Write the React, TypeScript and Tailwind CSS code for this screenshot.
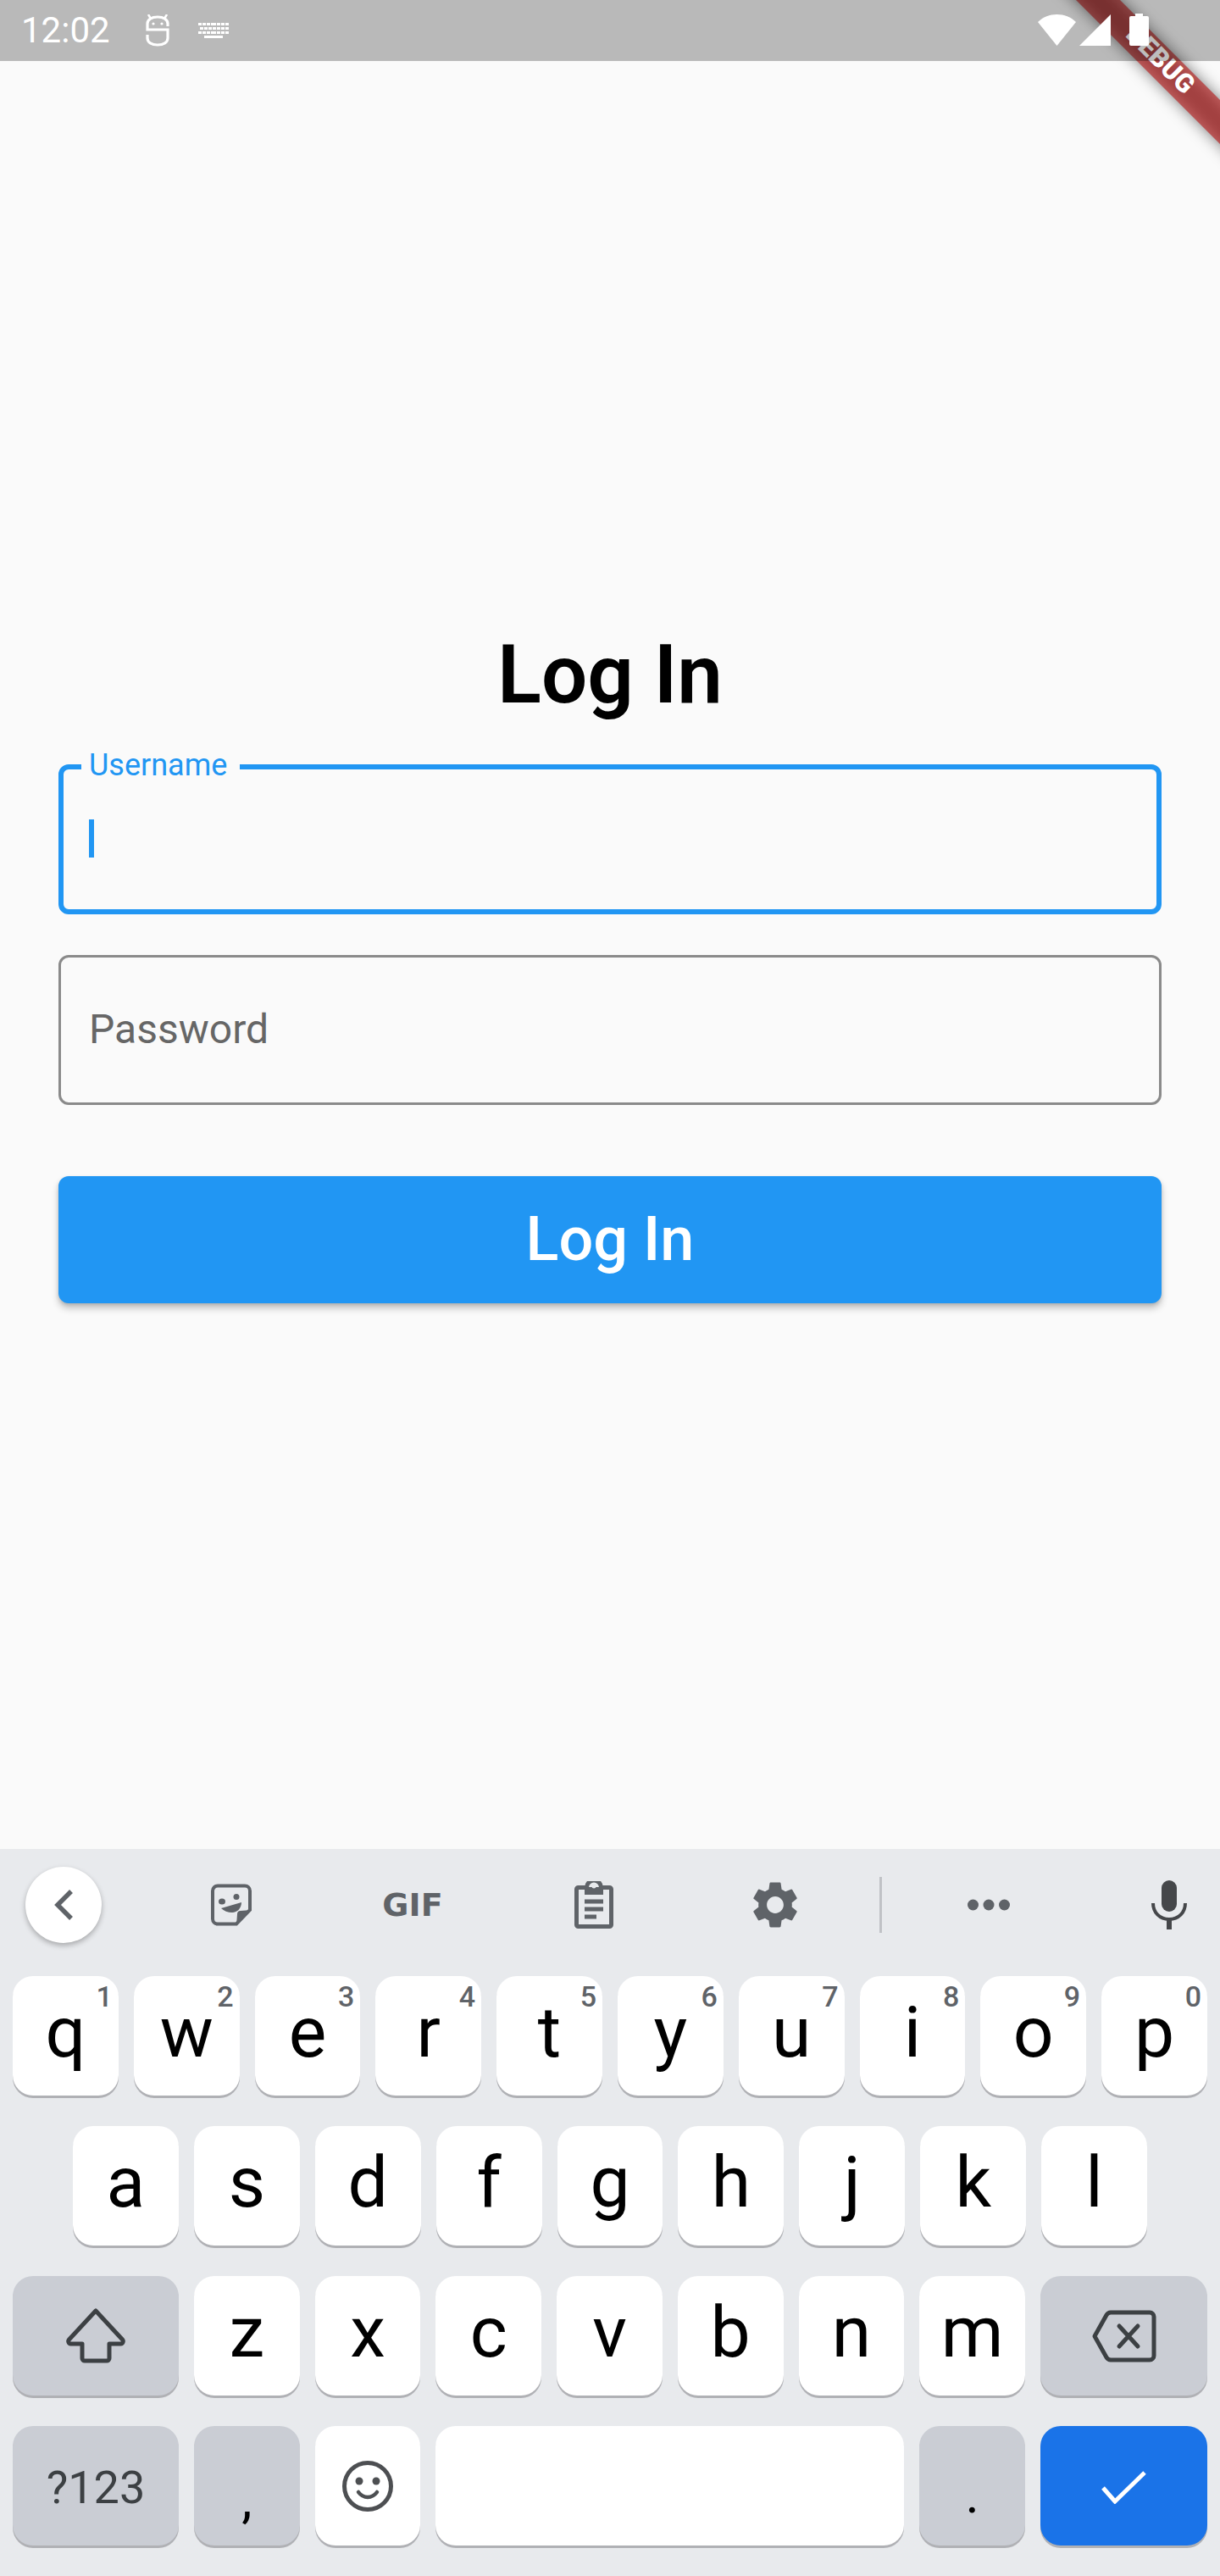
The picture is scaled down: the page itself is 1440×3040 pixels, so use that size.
import type { ReactNode } from "react";

const ROW_1 = [
  ["q", "1"],
  ["w", "2"],
  ["e", "3"],
  ["r", "4"],
  ["t", "5"],
  ["y", "6"],
  ["u", "7"],
  ["i", "8"],
  ["o", "9"],
  ["p", "0"],
];
const ROW_2 = ["a", "s", "d", "f", "g", "h", "j", "k", "l"];
const ROW_3 = ["z", "x", "c", "v", "b", "n", "m"];

function Key({
  children,
  hint,
  className = "bg-white text-black",
}: {
  children?: ReactNode;
  hint?: string;
  className?: string;
}) {
  return (
    <div
      className={`relative flex h-[141px] items-center justify-center rounded-[24px] shadow-[0_3px_0_#b0b1b5] ${className}`}
    >
      {hint && (
        <span className="absolute right-[7px] top-[4px] text-[34px] leading-[40px] font-medium text-[#5f6368]">
          {hint}
        </span>
      )}
      {children}
    </div>
  );
}

function Letter({ value }: { value: string }) {
  return <span className="pb-[7px] text-[84px] leading-[84px]">{value}</span>;
}

function DebugBanner() {
  return (
    <svg
      className="absolute right-0 top-0"
      width="300"
      height="260"
      viewBox="0 0 300 260"
    >
      <defs>
        <filter id="bannerBlur" x="-30%" y="-30%" width="160%" height="160%">
          <feGaussianBlur stdDeviation="9" />
        </filter>
      </defs>
      <polygon
        points="60,-70 112,-70 400,218 400,270"
        fill="#000"
        fillOpacity="0.5"
        filter="url(#bannerBlur)"
      />
      <polygon
        points="130,0 182,0 400,218 400,270"
        fill="#b71c1c"
        fillOpacity="0.63"
      />
      <text
        x="230"
        y="70"
        transform="rotate(45 230 70)"
        textAnchor="middle"
        dominantBaseline="central"
        fill="#fff"
        fontFamily="Roboto, sans-serif"
        fontWeight="900"
        fontSize="31"
      >
        DEBUG
      </text>
    </svg>
  );
}

function StatusBar() {
  return (
    <div className="absolute left-0 right-0 top-0 flex h-[72px] items-center bg-[rgba(0,0,0,0.26)] pl-[25px] text-white">
      <span className="text-[42px] leading-[72px]">12:02</span>
      <svg className="ml-[42px]" width="28" height="38" viewBox="0 0 28 38" fill="none">
        <path
          d="M26 14V11C26 6 21 3 14 3S2 6 2 11v7h24v10c0 5-5 8-12 8S2 33 2 28v-4"
          stroke="#fff"
          strokeWidth="3.2"
        />
        <path d="M3 0l3 5M25 0l-3 5" stroke="#fff" strokeWidth="2.5" />
        <circle cx="9" cy="11" r="1.6" fill="#fff" />
        <circle cx="19" cy="11" r="1.6" fill="#fff" />
      </svg>
      <svg className="ml-[34px]" width="36" height="20" viewBox="0 0 36 20" fill="#fff">
        <path d="M0 1h4v3H0zM5 1h4v3H5zM10 1h4v3h-4zM15 1h6v3h-6zM22 1h4v3h-4zM27 1h4v3h-4zM32 1h4v3h-4zM2 6h4v3H2zM7 6h4v3H7zM12 6h4v3h-4zM17 6h4v3h-4zM22 6h4v3h-4zM27 6h4v3h-4zM32 6h4v3h-4zM0 11h4v3H0zM5 11h4v3H5zM10 11h4v3h-4zM15 11h6v3h-6zM22 11h4v3h-4zM27 11h4v3h-4zM32 11h4v3h-4zM7 16h22v3H7z" />
      </svg>
      <svg className="absolute left-[1225px] top-[16px]" width="132" height="40" viewBox="0 0 132 40" fill="#fff">
        <path d="M0 10C6 4 14 1 22.5 1S39 4 45 10L22.5 38z" />
        <path d="M49 38L86 1v37z" />
        <path d="M115 0h9v3h5a2 2 0 0 1 2 2v31a2 2 0 0 1-2 2h-19a2 2 0 0 1-2-2V5a2 2 0 0 1 2-2h5z" />
      </svg>
    </div>
  );
}

function LoginForm() {
  return (
    <div className="flex flex-1 flex-col bg-[#fafafa] px-[69px] pt-[740px]">
      <h1 className="text-center text-[96px] leading-[112px] font-semibold text-black">
        Log In
      </h1>
      <div className="relative mt-[50px] flex h-[177px] items-center rounded-[12px] border-[6px] border-[#2196f3] pl-[30px]">
        <span className="absolute left-[21px] top-[-23px] bg-[#fafafa] pl-[9px] pr-[15px] text-[36px] leading-[36px] text-[#2196f3]">
          Username
        </span>
        <div className="mb-[3px] h-[45px] w-[6px] bg-[#2196f3]" />
      </div>
      <div className="mt-[48px] flex h-[177px] items-center rounded-[12px] border-[3px] border-[#8a8a8a] pl-[33px]">
        <span className="mb-[2px] text-[48px] leading-[56px] text-[#666666]">Password</span>
      </div>
      <button className="mt-[84px] flex h-[150px] items-center justify-center rounded-[12px] bg-[#2196f3] text-[72px] font-medium text-white shadow-[0_6px_9px_rgba(0,0,0,0.22),0_2px_4px_rgba(0,0,0,0.12)]">
        Log In
      </button>
    </div>
  );
}

function Toolbar() {
  return (
    <div className="mb-[18px] flex h-[132px] items-center pl-[30px]">
      <div className="flex h-[90px] w-[90px] items-center justify-center rounded-full bg-white shadow-[0_3px_6px_rgba(0,0,0,0.28)]">
        <svg width="28" height="38" viewBox="0 0 28 38" fill="none">
          <path d="M23 3L7 19l16 16" stroke="#5f6368" strokeWidth="5.5" />
        </svg>
      </div>
      <div className="ml-[46px] flex w-[214px] justify-center">
        <svg width="50" height="50" viewBox="0 0 50 50" fill="none">
          <path
            d="M31 47.500H9a6 6 0 0 1-6-6V8.500a6 6 0 0 1 6-6h32a6 6 0 0 1 6 6V31z"
            stroke="#5f6368"
            strokeWidth="4"
          />
          <path d="M31 49l1-13a4 4 0 0 1 4-4l13-1z" fill="#5f6368" />
          <ellipse cx="14" cy="21" rx="4" ry="3.500" fill="#5f6368" />
          <ellipse cx="31" cy="15.500" rx="3.500" ry="3.500" fill="#5f6368" />
          <path d="M13 29l24-7c0 7-5 12-11 12-5 0-10-2-13-5z" fill="#5f6368" />
        </svg>
      </div>
      <div className="flex w-[214px] justify-center">
        <span className="font-['DejaVu_Sans'] text-[38px] leading-[38px] font-bold text-[#5f6368]">
          GIF
        </span>
      </div>
      <div className="flex w-[214px] justify-center">
        <svg width="46" height="56" viewBox="0 0 46 56" fill="none">
          <path
            d="M2.500 9.500a2 2 0 0 1 2-2h10a8.500 8.500 0 0 1 17 0h10a2 2 0 0 1 2 2v42a2 2 0 0 1-2 2h-37a2 2 0 0 1-2-2z"
            stroke="#5f6368"
            strokeWidth="5"
          />
          <rect x="12" y="7" width="22" height="9" fill="#5f6368" />
          <circle cx="23" cy="6" r="2.500" fill="#e8eaed" />
          <path d="M12 24h22M12 33h22M12 42h14" stroke="#5f6368" strokeWidth="5" />
        </svg>
      </div>
      <div className="flex w-[214px] justify-center">
        <svg width="66" height="66" viewBox="0 0 24 24" fill="#5f6368">
          <path d="M19.14 12.94c.04-.3.06-.61.06-.94 0-.32-.02-.64-.07-.94l2.03-1.58c.18-.14.23-.41.12-.61l-1.92-3.32c-.12-.22-.37-.29-.59-.22l-2.39.96c-.5-.38-1.03-.7-1.62-.94l-.36-2.54c-.04-.24-.24-.41-.48-.41h-3.84c-.24 0-.43.17-.47.41l-.36 2.54c-.59.24-1.13.57-1.62.94l-2.39-.96c-.22-.08-.47 0-.59.22L2.740 8.870c-.12.21-.08.47.12.61l2.030 1.580c-.05.3-.09.63-.09.94s.02.64.07.94l-2.030 1.580c-.18.14-.23.41-.12.61l1.920 3.320c.12.22.37.29.59.22l2.390-.96c.5.38 1.030.7 1.620.94l.36 2.540c.05.24.24.41.48.41h3.840c.24 0 .44-.17.47-.41l.36-2.540c.59-.24 1.130-.56 1.620-.94l2.390.96c.22.08.47 0 .59-.22l1.920-3.320c.12-.22.07-.47-.12-.61l-2.010-1.580zM12 15.600c-1.980 0-3.600-1.620-3.600-3.600s1.620-3.600 3.600-3.600 3.600 1.620 3.600 3.600-1.620 3.600-3.600 3.600z" />
        </svg>
      </div>
      <div className="ml-[16px] h-[66px] w-[3px] bg-[#c0c2c6]" />
      <div className="ml-[19px] flex w-[214px] justify-center">
        <svg width="50" height="14" viewBox="0 0 50 14" fill="#5f6368">
          <circle cx="6.500" cy="7" r="6.500" />
          <circle cx="25" cy="7" r="6.500" />
          <circle cx="43.500" cy="7" r="6.500" />
        </svg>
      </div>
      <div className="ml-[56px] flex w-[100px] justify-center">
        <svg width="42" height="58" viewBox="0 0 42 58" fill="none">
          <rect x="12" y="0" width="18" height="37" rx="9" fill="#45474a" />
          <path d="M2 27c0 11 8 19 19 19s19-8 19-19" stroke="#45474a" strokeWidth="4" />
          <path d="M21 45v13" stroke="#45474a" strokeWidth="6" />
        </svg>
      </div>
    </div>
  );
}

function Keyboard() {
  return (
    <div className="flex h-[858px] flex-col bg-[#e8eaed]">
      <Toolbar />
      <div className="flex flex-col gap-[36px] px-[15px]">
        <div className="grid grid-cols-10 gap-[18px]">
          {ROW_1.map(([letter, hint]) => (
            <Key key={letter} hint={hint}>
              <Letter value={letter} />
            </Key>
          ))}
        </div>
        <div className="grid grid-cols-9 gap-[18px] px-[71px]">
          {ROW_2.map((letter) => (
            <Key key={letter}>
              <Letter value={letter} />
            </Key>
          ))}
        </div>
        <div className="grid grid-cols-[196px_repeat(7,1fr)_197px] gap-[18px]">
          <Key className="bg-[#cacdd4]">
            <svg width="70" height="66" viewBox="0 0 70 66" fill="none">
              <path
                d="M35 3L3.500 37a3 3 0 0 0 2 5H19v17a3 3 0 0 0 3 3h26a3 3 0 0 0 3-3V42h13.500a3 3 0 0 0 2-5z"
                stroke="#3c4043"
                strokeWidth="5"
                strokeLinejoin="round"
              />
            </svg>
          </Key>
          {ROW_3.map((letter) => (
            <Key key={letter}>
              <Letter value={letter} />
            </Key>
          ))}
          <Key className="bg-[#cacdd4]">
            <svg width="76" height="62" viewBox="0 0 76 62" fill="none">
              <path
                d="M3 31L17 6a6 6 0 0 1 5-3h46a5 5 0 0 1 5 5v46a5 5 0 0 1-5 5H22a6 6 0 0 1-5-3z"
                stroke="#3c4043"
                strokeWidth="5"
                strokeLinejoin="round"
              />
              <path
                d="M32 19l22 24M54 19L32 43"
                stroke="#3c4043"
                strokeWidth="5"
                strokeLinecap="round"
              />
            </svg>
          </Key>
        </div>
        <div className="grid grid-cols-[196px_repeat(7,1fr)_197px] gap-[18px]">
          <Key className="bg-[#cacdd4] text-[#3c4043]">
            <span className="pt-[5px] text-[54px] leading-[54px]">?123</span>
          </Key>
          <Key className="bg-[#cacdd4] text-black">
            <span className="pt-[32px] text-[62px] leading-[62px]">,</span>
          </Key>
          <Key>
            <svg width="60" height="60" viewBox="0 0 60 60" fill="none">
              <circle cx="30" cy="30" r="27.500" stroke="#4d4f52" strokeWidth="5" />
              <circle cx="20" cy="24" r="4.500" fill="#4d4f52" />
              <circle cx="40" cy="24" r="4.500" fill="#4d4f52" />
              <path
                d="M19 37c3 4 7 6 11 6s8-2 11-6"
                stroke="#4d4f52"
                strokeWidth="4.500"
                strokeLinecap="round"
              />
            </svg>
          </Key>
          <Key className="col-span-4 bg-white" />
          <Key className="bg-[#cacdd4] text-black">
            <span className="pt-[20px] text-[62px] leading-[62px]">.</span>
          </Key>
          <Key className="bg-[#1a73e8]">
            <svg className="mt-[2px]" width="54" height="40" viewBox="0 0 54 40" fill="none">
              <path d="M3 21l14 16L52 3" stroke="#fff" strokeWidth="5" />
            </svg>
          </Key>
        </div>
      </div>
    </div>
  );
}

export default function App() {
  return (
    <div className="relative flex h-[3040px] w-[1440px] flex-col overflow-hidden font-[Roboto,sans-serif]">
      <LoginForm />
      <Keyboard />
      <DebugBanner />
      <StatusBar />
    </div>
  );
}
